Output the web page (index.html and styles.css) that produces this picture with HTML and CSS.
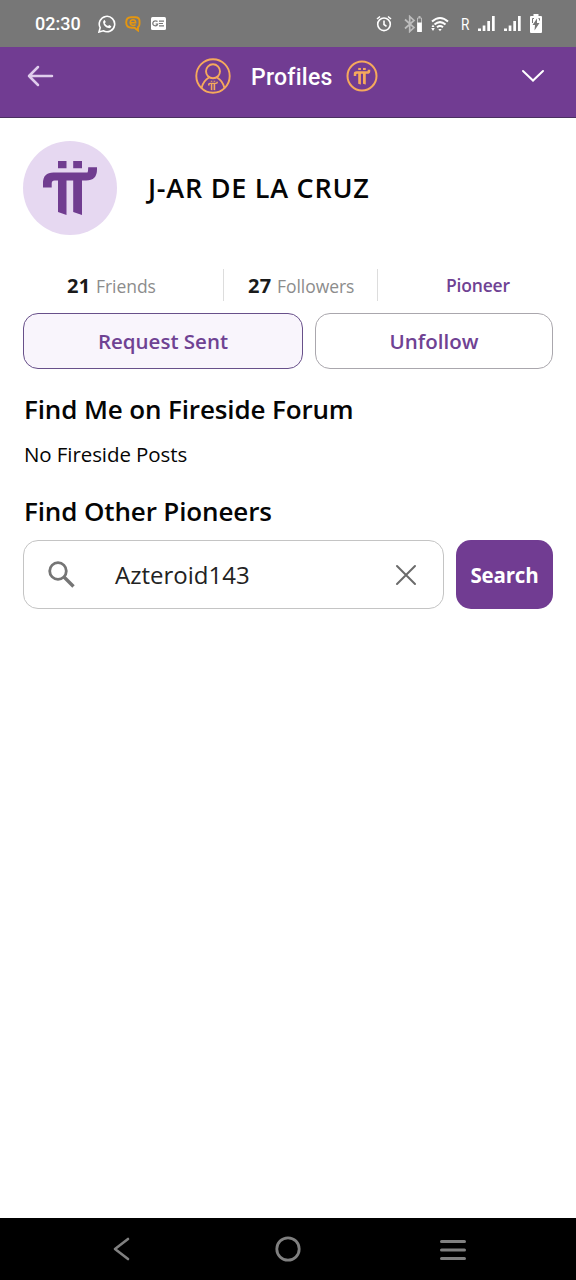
FILE: index.html
```html
<!DOCTYPE html>
<html lang="en">
<head>
<meta charset="utf-8">
<title>Profiles</title>
<link rel="stylesheet" href="styles.css">
</head>
<body>
<svg width="0" height="0" class="defs">
  <symbol id="pi" viewBox="0 0 54 54">
    <path d="M15 0h8.500v7.200H15zM30.200 0H39v7.200h-8.800zM0 26.500V22Q0 11.500 10.500 11.500H44.500Q45.200 10.500 45.200 6.300H54V8.500Q54 19.500 43 19.500H39V54L30.200 51V19.500H23.500V54L15 51V19.500H11.500Q8.700 19.500 8.700 22.500V26.500z"/>
  </symbol>
</svg>
<div class="screen">
  <div class="status">
    <span class="time">02:30</span>
    <svg class="whatsapp" width="18" height="18" viewBox="0 0 18 18" fill="none" stroke="#fff"><path d="M1 17l1.200-4.300A7.700 7.700 0 1 1 5.300 15.800z" stroke-width="1.600"/><path d="M6.500 4.700l1.300 2.200-1 1.300q1 2 3.200 2.900l1.200-1.100 2.200 1.200q-.6 2.200-2.700 1.900-4.700-.8-5.600-5.600-.2-1.900 1.400-2.800z" fill="#fff" stroke="none"/></svg>
    <svg class="chat" width="16" height="16" viewBox="0 0 16 16" fill="none" stroke="#e5960f"><path d="M6 1.200h4.500q4 0 4 3.800V8q0 2-1.500 3.200v3.300l-3.500-2.700H7Q1.200 11.800 1.200 6.500 1.200 1.200 6 1.200z" stroke-width="1.900"/><path d="M5.300 6.700h5.400q0-2.900-2.700-2.900T5.200 6.600q0 2.800 2.800 2.800 1.700 0 2.600-1" stroke-width="1.500"/></svg>
    <svg class="news" width="15" height="13" viewBox="0 0 15 13"><rect width="15" height="13" rx="1.500" fill="#fff"/><path d="M6.500 4.500Q5.700 3.800 4.500 3.800a2.500 2.500 0 1 0 2.200 3.200H4.600M8 4.200h5M8 6.500h4M8 8.800h5" fill="none" stroke="#777" stroke-width="1.200"/></svg>
    <span class="spacer"></span>
    <svg class="alarm" width="16" height="17" viewBox="0 0 16 17" fill="none" stroke="#fff" stroke-width="1.600"><circle cx="8" cy="9.300" r="6.300"/><path d="M8 5.500v4l2.500 1.800M1 4l3-2.500M15 4l-3-2.500"/></svg>
    <svg class="bluetooth" width="19" height="18" viewBox="0 0 19 18" fill="none" stroke="#bdbdbd" stroke-width="1.700"><path d="M1 4.500l9 8-4.300 4V1.500l4.300 4-9 8"/><path d="M13.500 16.500V3h4v13.500z" stroke-width="1"/><path d="M15.500 1v2" stroke-width="2"/><path d="M13.200 7.500h4.600V17h-4.600z" fill="#fff" stroke="none"/></svg>
    <svg class="wifi" width="18" height="16" viewBox="0 0 18 16" fill="none" stroke="#fff" stroke-width="2"><path d="M1 5.500q8-7 16 0M3.500 8.500q5.500-4.800 11 0M6 11.200q3-2.400 6 0"/><path d="M7.300 13h3.400L9 15.200zM.2 12h3.600L2 15zM.5 11L2 8.500 3.500 11z" fill="#fff" stroke="none"/></svg>
    <span class="roaming">R</span>
    <svg class="signal" width="17" height="16" viewBox="0 0 17 16" fill="#fff"><path d="M0 12.500h3V15H0zM4.700 9.500h2.700V15H4.700zM9.300 5h2.700v10H9.300zM14 0h2.700v15H14z"/></svg>
    <svg class="signal" width="17" height="16" viewBox="0 0 17 16" fill="#fff"><path d="M0 12.500h3V15H0zM4.700 9.500h2.700V15H4.700zM9.300 5h2.700v10H9.300zM14 0h2.700v15H14z"/></svg>
    <svg class="battery" width="12" height="19" viewBox="0 0 12 19"><path d="M3.500 0h5v2H11q1 0 1 1v15q0 1-1 1H1q-1 0-1-1V3q0-1 1-1h2.500z" fill="#fff"/><path d="M7 4.500L2.500 11H5l-.5 5.500L9.500 9H7z" fill="#777"/><path d="M2.500 9V4.500H4M9.500 6.500v-2H8.500" fill="none" stroke="#777"/></svg>
  </div>

  <header class="header">
    <svg class="back" width="27" height="22" viewBox="0 0 27 22" fill="none" stroke="#dfcdec" stroke-width="2.500" stroke-linecap="round" stroke-linejoin="round"><path d="M25 11H2M11 2L2 11l9 9"/></svg>
    <svg class="person" width="36" height="36" viewBox="0 0 36 36" fill="none" stroke="#f5a95c" stroke-width="1.900"><circle cx="18" cy="18" r="16.700"/><circle cx="18" cy="13.300" r="7"/><path d="M6.500 30Q8.500 22.500 14 19.500M29.500 30Q27.500 22.500 22 19.500"/><use href="#pi" x="13" y="22.500" width="10" height="10" fill="#f5a95c" stroke="none"/></svg>
    <h1 class="title">Profiles</h1>
    <svg class="coin" width="32" height="32" viewBox="0 0 32 32"><circle cx="16" cy="16" r="14.500" fill="none" stroke="#f5a95c" stroke-width="2"/><use href="#pi" x="7.500" y="7.700" width="17" height="17" fill="#f5a95c"/></svg>
    <svg class="chevron" width="24" height="14" viewBox="0 0 24 14" fill="none" stroke="#fff" stroke-width="2" stroke-linecap="round"><path d="M2 2l10 9.500L22 2"/></svg>
  </header>

  <main class="content">
    <section class="profile">
      <div class="avatar"><svg width="54" height="54"><use href="#pi" fill="#703c90"/></svg></div>
      <h2 class="name">J-AR DE LA CRUZ</h2>
    </section>
    <section class="stats">
      <div class="stat friends"><b>21</b><span class="label">Friends</span></div>
      <div class="stat followers"><b>27</b><span class="label">Followers</span></div>
      <div class="stat role"><span class="role-text">Pioneer</span></div>
    </section>
    <div class="actions">
      <button class="btn requested">Request Sent</button>
      <button class="btn">Unfollow</button>
    </div>
    <h3 class="heading forum">Find Me on Fireside Forum</h3>
    <p class="empty">No Fireside Posts</p>
    <h3 class="heading others">Find Other Pioneers</h3>
    <div class="search">
      <div class="field">
        <svg class="magnifier" width="27" height="27" viewBox="0 0 27 27" fill="none" stroke="#757575" stroke-width="2.800"><circle cx="10" cy="10" r="8.300"/><path d="M16 16l9.500 9.500" stroke-width="3.300"/></svg>
        <span class="query">Azteroid143</span>
        <svg class="clear" width="22" height="22" viewBox="0 0 22 22" stroke="#6b6b6b" stroke-width="2" stroke-linecap="round"><path d="M2 2l18 18M20 2L2 20"/></svg>
      </div>
      <button class="submit">Search</button>
    </div>
  </main>

  <nav class="nav">
    <svg width="18" height="24" viewBox="0 0 18 24" fill="none" stroke="#808080" stroke-width="2.600" stroke-linecap="round" stroke-linejoin="round"><path d="M15 2L2 12l13 10"/></svg>
    <svg class="home" width="26" height="26" viewBox="0 0 26 26" fill="none" stroke="#808080" stroke-width="2.800"><circle cx="13" cy="13" r="11.200"/></svg>
    <svg class="recent" width="26" height="22" viewBox="0 0 26 22" stroke="#808080" stroke-width="3" stroke-linecap="round"><path d="M1.500 2.500h23M1.500 11h23M1.500 19.500h23"/></svg>
  </nav>
</div>
</body>
</html>
```
FILE: styles.css
```css
* { box-sizing: border-box; }
body { margin: 0; background: #fff; font-family: "Open Sans", "Noto Sans", sans-serif; color: #050505; }
.defs { position: absolute; }
svg { display: block; flex: none; }
h1, h2, h3, p { margin: 0; white-space: nowrap; }
button { font: inherit; padding: 0; }
.screen { width: 576px; height: 1280px; display: flex; flex-direction: column; }

.status { height: 47px; flex: none; background: #777; display: flex; align-items: center; padding: 0 35px; color: #fff; font-family: Roboto, sans-serif; }
.time { font-size: 18px; line-height: 20px; font-weight: 500; width: 46px; margin-top: 1px; }
.whatsapp { margin-left: 17px; }
.chat { margin-left: 9px; }
.news { margin-left: 10px; }
.spacer { flex: 1; }
.alarm { margin-right: 12px; }
.bluetooth { margin-right: 8px; }
.wifi { margin-right: 12px; }
.roaming { font-size: 17px; line-height: 20px; width: 9px; margin-right: 8px; transform: scaleX(.8); transform-origin: left; }
.signal { margin-right: 9px; }
.battery { margin-right: -1px; }

.header { height: 71px; flex: none; background: #713c92; border-bottom: 1px solid #4a3060; display: flex; align-items: center; padding: 0 31px 12px 27px; }
.person { margin-left: 141px; }
.title { font: 500 23px/30px Roboto, sans-serif; color: #fff; width: 82px; margin: 4px 13px 0 20px; letter-spacing: .25px; }
.chevron { margin-left: auto; }

.content { flex: 1; padding: 23px 23px 0; }
.profile { display: flex; align-items: center; height: 94px; }
.avatar { width: 94px; height: 94px; border-radius: 50%; background: #e6d8f1; padding: 20px; }
.name { font-size: 27px; line-height: 36px; font-weight: 600; margin-left: 31px; letter-spacing: .75px; }

.stats { display: flex; height: 32px; margin-top: 34px; }
.stat { display: flex; align-items: baseline; line-height: 34px; border-right: 1px solid #ddd; white-space: nowrap; }
.stat b { font-size: 20px; font-weight: 700; color: #1a1a1a; width: 29px; letter-spacing: .4px; }
.label { font-size: 17.500px; color: #8c8c8c; letter-spacing: -.05px; }
.friends { width: 201px; padding-left: 44px; }
.followers { width: 154px; padding-left: 24px; }
.role { border: 0; padding-left: 68px; }
.role-text { font-size: 17.500px; line-height: 32px; font-weight: 600; color: #6f4293; letter-spacing: -.2px; }

.actions { display: flex; gap: 12px; margin-top: 12px; }
.btn { width: 238px; height: 56px; border: 1px solid #aaa7ad; border-radius: 15px; background: #fff; color: #6f4293; font-size: 20.500px; font-weight: 600; padding-bottom: 1px; }
.requested { width: 280px; border-color: #68508a; background: #f9f5fc; }

.heading { font-size: 26px; line-height: 36px; font-weight: 600; letter-spacing: -.13px; padding-left: 1px; }
.forum { margin-top: 22px; }
.empty { font-size: 20.500px; line-height: 28px; margin-top: 13px; padding-left: 1px; letter-spacing: -.08px; }
.others { margin-top: 25px; }

.search { display: flex; gap: 12px; margin-top: 11px; }
.field { width: 421px; height: 69px; border: 1px solid #c4c4c4; border-radius: 15px; display: flex; align-items: center; padding: 0 26px 0 24px; }
.query { font-size: 24px; line-height: 34px; color: #222; margin-left: 40px; }
.clear { margin-left: auto; }
.submit { width: 97px; height: 69px; border: 0; border-radius: 15px; background: #713c92; color: #fff; font-size: 20.500px; font-weight: 700; letter-spacing: -.2px; }

.nav { height: 62px; flex: none; background: #000; display: flex; align-items: center; padding-left: 113px; }
.home { margin-left: 144px; }
.recent { margin-left: 139px; margin-top: 2px; }
```
